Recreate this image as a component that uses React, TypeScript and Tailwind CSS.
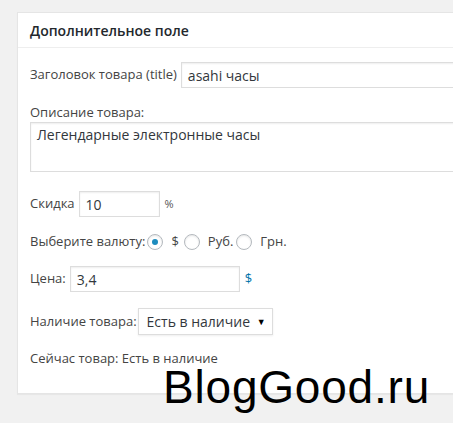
import React from "react";

function Radio({ checked }: { checked?: boolean }) {
  return (
    <span className="inline-flex h-[16px] w-[16px] items-center justify-center rounded-full border border-[#b4b9be] bg-white shadow-[inset_0_1px_2px_rgba(0,0,0,0.1)]">
      {checked && <span className="h-[6px] w-[6px] rounded-full bg-[#1e8cbe]" />}
    </span>
  );
}

export default function App() {
  return (
    <div
      className="relative h-[423px] w-[453px] overflow-hidden bg-[#f1f1f1] text-[13px] text-[#444]"
      style={{ fontFamily: '"Open Sans", "Noto Sans", sans-serif' }}
    >
      <div className="pt-[12px] pl-[17px]">
        <div className="w-[460px] border border-[#e5e5e5] bg-white pb-[25px] shadow-[0_1px_1px_rgba(0,0,0,0.04)]">
          <div className="flex h-[35px] items-center border-b border-[#eee] px-[12px] text-[14px] font-semibold text-[#23282d]">
            Дополнительное поле
          </div>
          <div className="px-[12px]">
            <div className="mt-[14px] flex h-[26px] items-center">
              <span className="mr-[4px]">Заголовок товара (title)</span>
              <div className="flex h-[26px] flex-1 items-center border border-[#ddd] px-[6px] text-[14px] text-[#32373c] shadow-[inset_0_1px_2px_rgba(0,0,0,0.07)]">
                asahi часы
              </div>
            </div>
            <div className="mt-[14px] h-[20px] leading-[20px]">Описание товара:</div>
            <div className="h-[50px] border border-[#ddd] px-[6px] pt-[2px] text-[14px] leading-[20px] text-[#32373c] shadow-[inset_0_1px_2px_rgba(0,0,0,0.07)]">
              Легендарные электронные часы
            </div>
            <div className="mt-[19px] flex h-[26px] items-center">
              <span className="mr-[4px]">Скидка</span>
              <div className="flex h-[26px] w-[81px] items-center border border-[#ddd] px-[6px] text-[14px] text-[#32373c] shadow-[inset_0_1px_2px_rgba(0,0,0,0.07)]">
                10
              </div>
              <span className="ml-[5px] text-[11px] text-[#555]">%</span>
            </div>
            <div className="mt-[15px] flex h-[20px] items-center">
              <span className="mr-[2px]">Выберите валюту:</span>
              <Radio checked />
              <span className="ml-[8px] mr-[5px]">$</span>
              <Radio />
              <span className="ml-[8px] mr-[3px]">Руб.</span>
              <Radio />
              <span className="ml-[8px]">Грн.</span>
            </div>
            <div className="mt-[14px] flex h-[26px] items-center">
              <span className="mr-[4px]">Цена:</span>
              <div className="flex h-[26px] w-[170px] items-center border border-[#ddd] px-[6px] text-[14px] text-[#32373c] shadow-[inset_0_1px_2px_rgba(0,0,0,0.07)]">
                3,4
              </div>
              <span className="ml-[5px] text-[#0073aa]">$</span>
            </div>
            <div className="mt-[16px] flex h-[27px] items-center">
              <span className="mr-[1px]">Наличие товара:</span>
              <div className="flex h-[27px] w-[135px] items-center justify-between border border-[#ddd] pl-[8px] pr-[6px] text-[14px] text-[#32373c] shadow-[0_1px_2px_rgba(0,0,0,0.07)]">
                <span>Есть в наличие</span>
                <span className="text-[9px] text-black">▼</span>
              </div>
            </div>
            <div className="mt-[13px] h-[20px] leading-[20px]">Сейчас товар: Есть в наличие</div>
          </div>
        </div>
      </div>
      <div
        className="absolute left-[163px] top-[364px] text-[46px] leading-[46px] tracking-[0.8px] text-black"
        style={{ fontFamily: '"Liberation Sans", Arial, sans-serif' }}
      >
        BlogGood.ru
      </div>
    </div>
  );
}
